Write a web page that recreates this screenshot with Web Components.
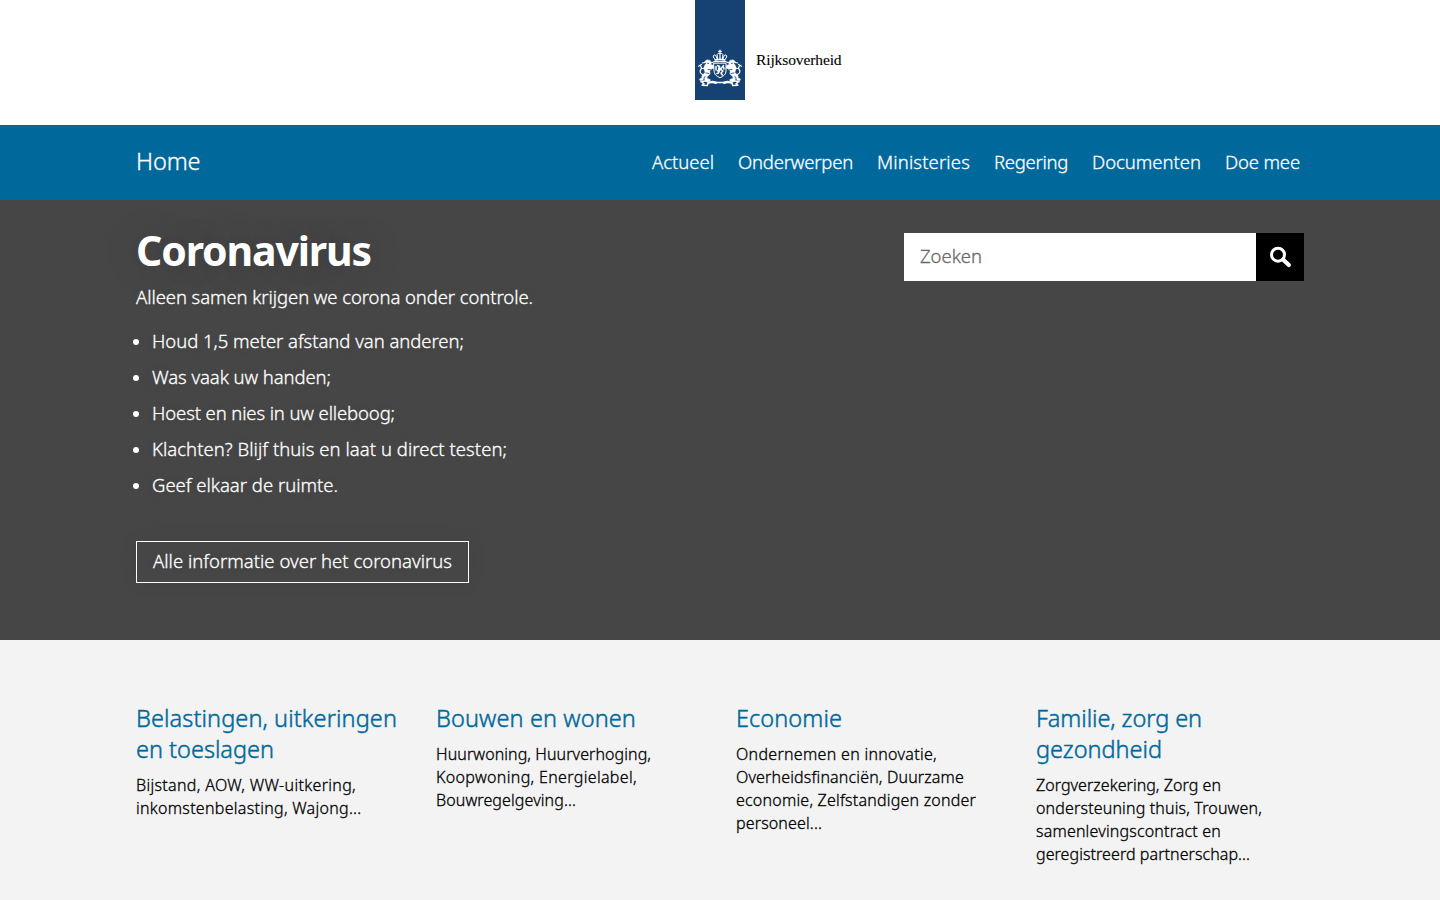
<!DOCTYPE html>
<html lang="nl">
<head>
<meta charset="utf-8">
<title>Rijksoverheid</title>
<style>
html,body{margin:0;padding:0}
body{font-family:"Noto Sans","Open Sans",sans-serif;font-weight:300;-webkit-text-stroke-width:.3px;background:#f3f3f3;height:900px;overflow:hidden}
</style>
</head>
<body>
<ro-page></ro-page>
<script>
const define=(name,html,init)=>customElements.define(name,class extends HTMLElement{
  constructor(){super();this.attachShadow({mode:'open'}).innerHTML=html}
  connectedCallback(){if(init)init.call(this)}
});

// A single line of text, tracked so that it fills the given measure.
define('text-run','<style>:host{display:inline-block;white-space:nowrap}</style><slot></slot>',function(){
  const target=parseFloat(this.getAttribute('measure'));
  const n=[...this.textContent].length;
  const natural=this.getBoundingClientRect().width;
  if(target&&natural)this.style.letterSpacing=((target-natural)/n).toFixed(3)+'px';
});

define('ro-logo',`<style>
:host{display:flex;height:125px;background:#fff;padding-left:695px;box-sizing:border-box}
.ribbon{width:50px;height:100px;background:#154273;display:flex;align-items:flex-end}
svg{display:block;margin:0 0 11px 2px}
.word{font:400 15.500px/20px "Liberation Serif",serif;-webkit-text-stroke:.1px #000;color:#000;padding:50px 0 0 11px}
</style>
<div class="ribbon"><svg width="46" height="40" viewBox="0 0 46 40" fill="none" stroke="#fff" stroke-linecap="round" stroke-linejoin="round">
<defs><g id="side">
<path d="M8 12.200l2-1.300 3 .500 1.500 2-.8 2 2.600 1 1.400 2.600-2.500.500-2.500 2.500.400 3-2.800 2.600-.4 2 3.300.9-.2 1.600H8.500l-1-2.500 2-3-2.500 1-1.200 3.600-2.800.200-.300-1.500 2-.6.5-3 3-2.800L6.800 19l1-2.800 1.200-1.500z" fill="#fff" stroke-width=".6"/>
<path d="M5.500 25.500c-2.500-1-3-3.500-1.700-5s.500-3-1-4M1.500 17.200l3-1.700" stroke-width="1.200"/>
<path d="M8.500 19.300l-4 .200M8 13.500l-2.700.500" stroke-width="1.100"/>
<path d="M11 20.500l2.800.300M9 24l3 .5M10.500 14.200l1.200.300" stroke="#154273" stroke-width=".8"/>
<path d="M4 32.700l5-1 2.500 1.500 4-.700 4 .8 3.500.2M5 33.200l2 1.600-1.800 1.400 5 .3.800-2.300 4-.9 4 1" stroke-width="1.600"/>
<path d="M18.500 11.200l-2.200-3.200c-.6-1.800 1.300-2.800 2.600-1.300l1.300 3.500M20.500 10l-.4-4.500c.5-1 1.600-1.200 2.900-1.200" stroke-width="1"/>
<path d="M15 13.500l3-1 5-.200" stroke-width="1.300"/>
</g></defs>
<use href="#side"/><use href="#side" transform="matrix(-1 0 0 1 46 0)"/>
<path d="M23 1.200v3.300M21.700 2.400h2.600M23 5v5" stroke-width="1.200"/>
<path d="M18.300 11q4.700-1.300 9.400 0" stroke-width="1.500"/>
<path d="M17 14.200h12V22q0 4.500-6 6.700Q17 26.500 17 22z" fill="#154273" stroke-width="1"/>
<path d="M20.500 16.500l2 1-1 2.500 3-1 2-2.500M20.500 22l3.500-1.500 2 1.500-2 2 1.300 2M23 20l-1.500 4-1.500.500M19 17.500v3.500M26.700 18.500l.3 1.500" stroke-width="1.500"/>
</svg></div>
<div class="word"><text-run measure="85.500">Rijksoverheid</text-run></div>`);

define('ro-nav',`<style>
:host{display:flex;align-items:center;justify-content:space-between;height:75px;background:#01689b;color:#fff;box-sizing:border-box;padding:0 140px 0 136px}
.home{font-size:23.500px;padding-bottom:3px}
nav{display:flex;gap:24px;font-size:18.500px;padding-bottom:2px}
</style>
<div class="home"><text-run measure="64.500">Home</text-run></div>
<nav><text-run measure="62">Actueel</text-run><text-run measure="115">Onderwerpen</text-run><text-run measure="93">Ministeries</text-run><text-run measure="74">Regering</text-run><text-run measure="109">Documenten</text-run><text-run measure="75">Doe mee</text-run></nav>`);

define('ro-search',`<style>
:host{display:flex;width:400px;height:48px;margin-top:33px}
.field{flex:1;background:#fff;color:#696969;font-size:18.500px;line-height:45px;padding-left:16px}
.go{width:48px;background:#000;display:flex;align-items:center;justify-content:center}
</style>
<div class="field"><text-run measure="62">Zoeken</text-run></div>
<div class="go"><svg width="24" height="24" viewBox="0 0 24 24" fill="none" stroke="#fff"><circle cx="10" cy="9.700" r="6.500" stroke-width="3"/><path d="M15.200 14.800l5.600 5.200" stroke-width="4.200" stroke-linecap="round"/></svg></div>`);

define('ro-hero',`<style>
:host{display:flex;justify-content:space-between;align-items:flex-start;height:440px;background:#464646;color:#fff;padding:0 136px;box-sizing:border-box;font-size:18.500px;text-shadow:0 0 20px rgba(0,0,0,.12)}
ro-search{text-shadow:none}
h1{font-size:41px;line-height:48px;margin:26px 0 9px;font-weight:700;-webkit-text-stroke-width:0;text-shadow:0 0 40px rgba(0,0,0,.2)}
p{margin:0;line-height:28px}
ul{list-style:none;margin:12px 0 38px;padding:0}
li{display:flex;align-items:center;line-height:36px;margin-left:-3px}
li::before{content:"";width:6px;height:6px;border-radius:50%;background:#fff;margin:2px 13px 0 0}
.button{display:inline-block;box-sizing:border-box;width:333px;height:42px;border:1px solid #fff;line-height:38px;padding-left:16px;box-shadow:0 0 20px rgba(0,0,0,.06)}
</style>
<div><h1><text-run measure="235">Coronavirus</text-run></h1>
<p><text-run measure="397">Alleen samen krijgen we corona onder controle.</text-run></p>
<ul><li><text-run measure="312">Houd 1,5 meter afstand van anderen;</text-run></li>
<li><text-run measure="179">Was vaak uw handen;</text-run></li>
<li><text-run measure="243">Hoest en nies in uw elleboog;</text-run></li>
<li><text-run measure="355">Klachten? Blijf thuis en laat u direct testen;</text-run></li>
<li><text-run measure="186">Geef elkaar de ruimte.</text-run></li></ul>
<div class="button"><text-run measure="299">Alle informatie over het coronavirus</text-run></div></div>
<ro-search></ro-search>`);

define('topic-card',`<style>
:host{display:block;color:#000;font-size:16px;line-height:23px}
.title{display:flex;flex-direction:column;align-items:flex-start;color:#01689b;font-size:23.500px;line-height:31px;margin-bottom:9px;-webkit-text-stroke-width:.45px}
.body{display:flex;flex-direction:column;align-items:flex-start}
</style><div class="title"><slot name="title"></slot></div><div class="body"><slot></slot></div>`);

define('ro-topics',`<style>
:host{display:grid;grid-template-columns:repeat(4,300px);padding:63px 104px 0 136px;height:260px;box-sizing:border-box;background:#f3f3f3}
</style>
<topic-card><text-run slot="title" measure="261">Belastingen, uitkeringen</text-run><text-run slot="title" measure="138">en toeslagen</text-run><text-run measure="220">Bijstand, AOW, WW-uitkering,</text-run><text-run measure="225.500">inkomstenbelasting, Wajong...</text-run></topic-card>
<topic-card><text-run slot="title" measure="200">Bouwen en wonen</text-run><text-run measure="215">Huurwoning, Huurverhoging,</text-run><text-run measure="201">Koopwoning, Energielabel,</text-run><text-run measure="140">Bouwregelgeving...</text-run></topic-card>
<topic-card><text-run slot="title" measure="106">Economie</text-run><text-run measure="201">Ondernemen en innovatie,</text-run><text-run measure="228">Overheidsfinanciën, Duurzame</text-run><text-run measure="240">economie, Zelfstandigen zonder</text-run><text-run measure="86">personeel...</text-run></topic-card>
<topic-card><text-run slot="title" measure="166">Familie, zorg en</text-run><text-run slot="title" measure="126">gezondheid</text-run><text-run measure="185">Zorgverzekering, Zorg en</text-run><text-run measure="226">ondersteuning thuis, Trouwen,</text-run><text-run measure="185">samenlevingscontract en</text-run><text-run measure="214">geregistreerd partnerschap...</text-run></topic-card>`);

define('ro-page',`<style>:host{display:block;width:1440px}</style><ro-logo></ro-logo><ro-nav></ro-nav><ro-hero></ro-hero><ro-topics></ro-topics>`);
</script>
</body>
</html>
